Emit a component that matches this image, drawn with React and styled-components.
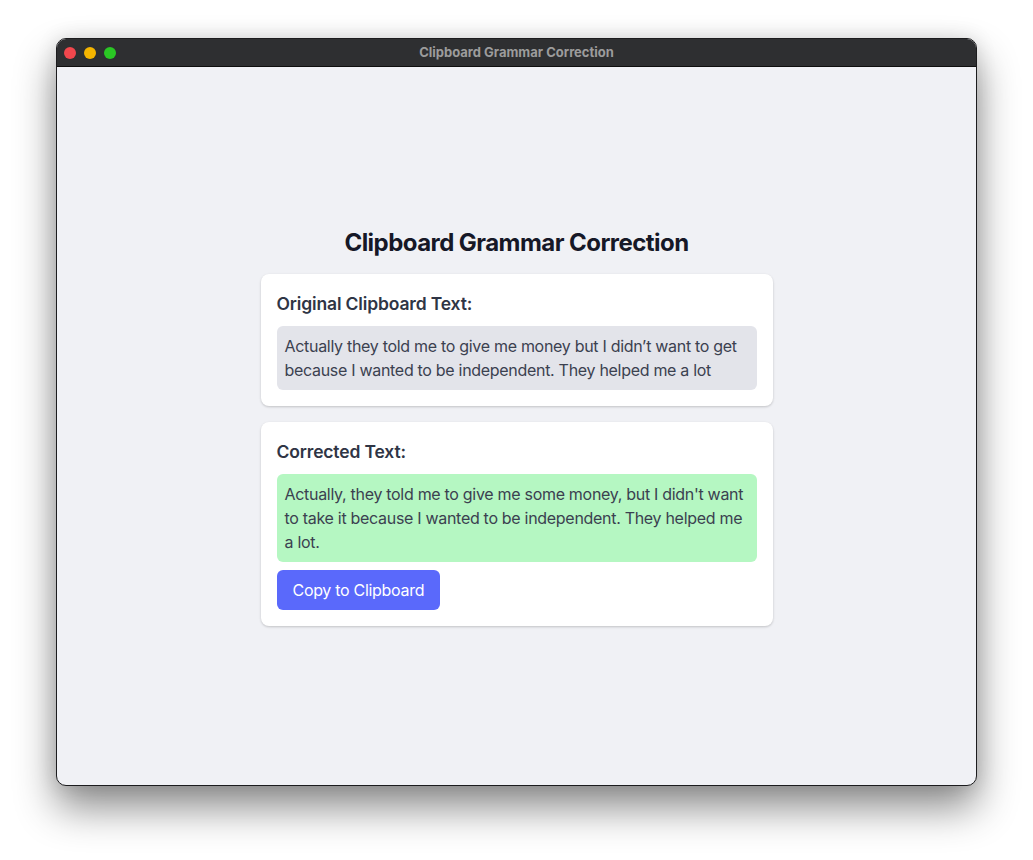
import React from "react";
import styled, { createGlobalStyle } from "styled-components";

const Global = createGlobalStyle`
  html, body { margin: 0; padding: 0; background: #ffffff; }
  body { font-family: Inter, "Noto Sans", "Liberation Sans", sans-serif; }
  * { box-sizing: border-box; }
`;

const Stage = styled.div`
  width: 1033px;
  height: 860px;
  padding: 38px 56px 74px 56px;
  background: #ffffff;
`;

const Window = styled.div`
  height: 748px;
  border-radius: 10px;
  border: 1px solid #1c1c1e;
  background: #f0f1f5;
  box-shadow: 0 22px 40px rgba(0, 0, 0, 0.45), 0 0 20px rgba(0, 0, 0, 0.12);
  display: flex;
  flex-direction: column;
  overflow: hidden;
`;

const TitleBar = styled.div`
  height: 28px;
  flex: none;
  background: #2e2f31;
  border-bottom: 1px solid #0e0e0e;
  display: flex;
  align-items: center;
  justify-content: center;
  position: relative;
`;

const Lights = styled.div`
  position: absolute;
  left: 7px;
  top: 8px;
  display: flex;
  gap: 8px;
`;

const Light = styled.span`
  width: 12px;
  height: 12px;
  border-radius: 50%;
  background: ${(p) => p.$c};
`;

const TitleText = styled.div`
  font-size: 13px;
  font-weight: 700;
  color: #9c9c9c;
  margin-top: -1px;
`;

const Content = styled.main`
  flex: 1;
  display: flex;
  flex-direction: column;
  align-items: center;
  justify-content: center;
`;

const Heading = styled.h1`
  margin: 0 0 15px;
  font-size: 24px;
  line-height: 32px;
  font-weight: 700;
  letter-spacing: -0.55px;
  color: #161827;
`;

const Stack = styled.div`
  width: 512px;
  display: flex;
  flex-direction: column;
  gap: 16px;
`;

const Card = styled.section`
  background: #ffffff;
  border-radius: 8px;
  padding: 16px;
  box-shadow: 0 1px 3px rgba(0, 0, 0, 0.12), 0 1px 2px rgba(0, 0, 0, 0.08);
  display: flex;
  flex-direction: column;
  align-items: flex-start;
`;

const CardTitle = styled.h2`
  margin: 0 0 8px;
  font-size: 17.5px;
  line-height: 28px;
  font-weight: 600;
  letter-spacing: -0.15px;
  color: #2f3545;
`;

const TextBox = styled.div`
  align-self: stretch;
  background: ${(p) => p.$bg};
  border-radius: 6px;
  padding: 8px;
  font-size: 16px;
  line-height: 24px;
  letter-spacing: -0.3px;
  color: #3b4150;
`;

const Button = styled.button`
  margin-top: 8px;
  border: none;
  background: #5a69fb;
  color: #ffffff;
  font-family: inherit;
  font-size: 16px;
  line-height: 24px;
  letter-spacing: -0.3px;
  padding: 8px 16px;
  border-radius: 6px;
  cursor: pointer;
`;

export default function App() {
  return (
    <Stage>
      <Global />
      <Window>
        <TitleBar>
          <Lights>
            <Light $c="#f1474d" />
            <Light $c="#f5b500" />
            <Light $c="#2ac724" />
          </Lights>
          <TitleText>Clipboard Grammar Correction</TitleText>
        </TitleBar>
        <Content>
          <Heading>Clipboard Grammar Correction</Heading>
          <Stack>
            <Card>
              <CardTitle>Original Clipboard Text:</CardTitle>
              <TextBox $bg="#e3e4ea">
                Actually they told me to give me money but I didn’t want to get because I wanted to be independent. They helped me a lot
              </TextBox>
            </Card>
            <Card>
              <CardTitle>Corrected Text:</CardTitle>
              <TextBox $bg="#b5f7c2">
                Actually, they told me to give me some money, but I didn't want to take it because I wanted to be independent. They helped me a lot.
              </TextBox>
              <Button>Copy to Clipboard</Button>
            </Card>
          </Stack>
        </Content>
      </Window>
    </Stage>
  );
}
